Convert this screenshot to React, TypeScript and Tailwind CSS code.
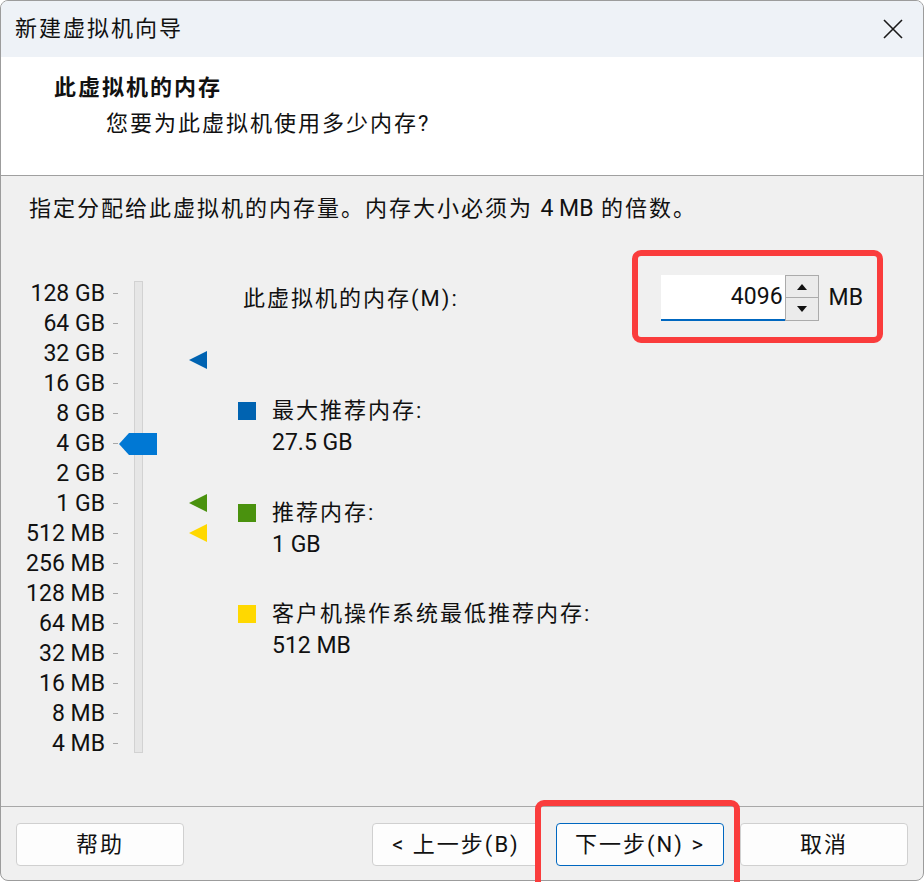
import React from "react";

const FONT = "font-['Roboto','Noto_Sans_CJK_SC',sans-serif]";

const SCALE = [
  "128 GB", "64 GB", "32 GB", "16 GB", "8 GB", "4 GB", "2 GB", "1 GB",
  "512 MB", "256 MB", "128 MB", "64 MB", "32 MB", "16 MB", "8 MB", "4 MB",
];

// row offset (px from top of the scale) for a value in MB
function rowCenter(mb: number) {
  return 15 + 30 * (17 - Math.log2(mb));
}

const MARKERS = [
  { mb: 28160, color: "#0063b1" },
  { mb: 1024, color: "#4a920e" },
  { mb: 512, color: "#ffd800" },
];

const LEGEND = [
  { color: "bg-[#0063b1]", label: "最大推荐内存:", value: "27.5 GB", mt: "mt-[74px]" },
  { color: "bg-[#4a920e]", label: "推荐内存:", value: "1 GB", mt: "mt-[38px]" },
  { color: "bg-[#ffd800]", label: "客户机操作系统最低推荐内存:", value: "512 MB", mt: "mt-[37px]" },
];

function Triangle({ color }: { color: string }) {
  return (
    <svg width="18" height="18" viewBox="0 0 18 18">
      <polygon points="0,9 18,0 18,18" fill={color} />
    </svg>
  );
}

function Button({ children, primary }: { children: React.ReactNode; primary?: boolean }) {
  return (
    <div
      className={`w-[168px] h-[43px] rounded-[4px] bg-[#fdfdfd] border flex items-center justify-center text-[22px] text-[#111] tracking-[2px] ${
        primary ? "border-[#0067c0]" : "border-[#d0d0d0]"
      }`}
    >
      {children}
    </div>
  );
}

export default function App() {
  const thumbTop = rowCenter(4096) - 11 - 3;

  return (
    <div className={`relative w-[924px] h-[882px] overflow-hidden bg-white ${FONT} text-[#111]`}>
      <div className="w-[924px] h-[881px] border border-[#9c9c9c] rounded-[8px] overflow-hidden flex flex-col bg-[#f0f0f0]">
        {/* title bar */}
        <div className="h-[56px] shrink-0 bg-[#eef2f7] flex items-center pl-[14px] pr-[20px]">
          <span className="text-[22px] tracking-[2px] leading-[30px]">新建虚拟机向导</span>
          <svg className="ml-auto" width="20" height="20" viewBox="0 0 20 20">
            <path d="M1 1 L19 19 M19 1 L1 19" stroke="#1a1a1a" strokeWidth="1.6" />
          </svg>
        </div>

        {/* header */}
        <div className="h-[119px] shrink-0 bg-white border-b border-[#a0a0a0] pt-[16px]">
          <div className="pl-[53px] text-[22px] font-bold tracking-[2px] leading-[30px]">此虚拟机的内存</div>
          <div className="pl-[105px] mt-[6px] text-[22px] tracking-[2px] leading-[30px]">您要为此虚拟机使用多少内存?</div>
        </div>

        {/* body */}
        <div className="h-[630px] shrink-0 pt-[18px]">
          <div className="pl-[28px] text-[22px] tracking-[2px] leading-[30px]">
            指定分配给此虚拟机的内存量。内存大小必须为 <span className="tracking-normal text-[23px]">4 MB</span> 的倍数。
          </div>

          <div className="mt-[51px] flex items-start">
            {/* scale labels */}
            <div className="mt-[3px] w-[104px] flex flex-col">
              {SCALE.map((s) => (
                <div key={s} className="h-[30px] flex items-center justify-end text-[23px] leading-none">
                  {s}
                </div>
              ))}
            </div>
            {/* ticks */}
            <div className="mt-[3px] ml-[8px] w-[5px] flex flex-col">
              {SCALE.map((s) => (
                <div key={s} className="h-[30px] flex items-center">
                  <div className="w-[5px] h-[1px] bg-[#a8a8a8]" />
                </div>
              ))}
            </div>
            {/* track */}
            <div className="relative mt-[6px] ml-[16px] w-[9px] h-[472px] bg-[#e6e6e6] border border-[#d2d2d2]">
              <svg
                className="absolute left-[-16px]"
                style={{ top: thumbTop }}
                width="38"
                height="22"
                viewBox="0 0 38 22"
              >
                <polygon points="0,11 10,0 38,0 38,22 10,22" fill="#0078d4" />
              </svg>
            </div>
            {/* markers */}
            <div className="relative mt-[3px] ml-[46px] w-[18px] h-[480px]">
              {MARKERS.map((m) => (
                <div key={m.mb} className="absolute left-0" style={{ top: rowCenter(m.mb) - 9 }}>
                  <Triangle color={m.color} />
                </div>
              ))}
            </div>
            {/* right side */}
            <div className="ml-[31px] flex-1 pr-[60px]">
              <div className="h-[46px] flex items-center">
                <span className="ml-[5px] text-[22px] tracking-[2px]">此虚拟机的内存(M):</span>
                <div className="ml-auto flex h-[46px]">
                  <div className="w-[124px] h-[46px] bg-white border-b-2 border-[#0067c0] flex items-center justify-end pr-[2px] text-[23px]">
                    4096
                  </div>
                  <div className="w-[34px] h-[46px] flex flex-col">
                    <div className="h-[23px] bg-[#ebebeb] border border-[#ababab] flex items-center justify-center">
                      <svg width="10" height="6" viewBox="0 0 10 6">
                        <polygon points="5,0 10,6 0,6" fill="#111" />
                      </svg>
                    </div>
                    <div className="h-[23px] bg-[#ebebeb] border border-[#ababab] border-t-0 flex items-center justify-center">
                      <svg width="10" height="6" viewBox="0 0 10 6">
                        <polygon points="0,0 10,0 5,6" fill="#111" />
                      </svg>
                    </div>
                  </div>
                </div>
                <span className="ml-[10px] text-[23px]">MB</span>
              </div>

              {LEGEND.map((l) => (
                <div key={l.label} className={`${l.mt} flex items-start`}>
                  <div className={`mt-[7px] w-[18px] h-[18px] ${l.color}`} />
                  <div className="ml-[16px] text-[22px] leading-[32px]">
                    <div className="tracking-[2px]">{l.label}</div>
                    <div className="text-[23px]">{l.value}</div>
                  </div>
                </div>
              ))}
            </div>
          </div>
        </div>

        {/* footer */}
        <div className="flex-1 border-t border-[#a8a8a8] pt-[16px] px-[15px] flex items-start">
          <Button>帮助</Button>
          <div className="ml-auto flex gap-[16px]">
            <Button>&lt; 上一步(B)</Button>
            <Button primary>下一步(N) &gt;</Button>
            <Button>取消</Button>
          </div>
        </div>
      </div>

      {/* annotation highlights */}
      <div className="absolute left-[632px] top-[250px] w-[251px] h-[93px] border-[6px] border-[#fa3c3c] rounded-[9px]" />
      <div className="absolute left-[535px] top-[800px] w-[205px] h-[92px] border-[6px] border-[#fa3c3c] rounded-[9px]" />
    </div>
  );
}
